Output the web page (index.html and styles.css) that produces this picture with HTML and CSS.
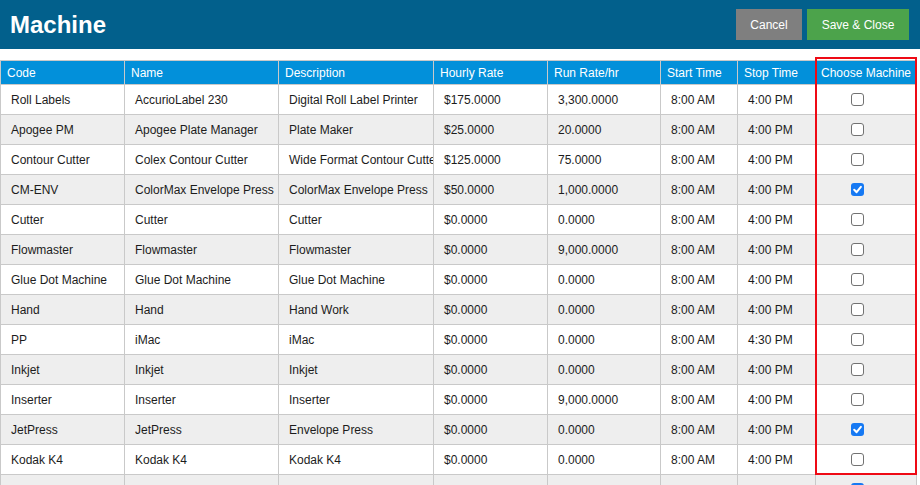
FILE: index.html
```html
<!DOCTYPE html>
<html>
<head>
<meta charset="utf-8">
<link rel="stylesheet" href="styles.css">
</head>
<body>
<div class="page">
  <header class="topbar">
    <h1 class="title">Machine</h1>
    <div class="actions">
      <button class="btn btn-cancel">Cancel</button>
      <button class="btn btn-save">Save &amp; Close</button>
    </div>
  </header>
  <div class="grid-wrap">
    <table class="grid">
      <colgroup>
        <col class="c-code"><col class="c-name"><col class="c-desc"><col class="c-rate"><col class="c-run"><col class="c-start"><col class="c-stop"><col class="c-choose">
      </colgroup>
      <thead>
        <tr><th>Code</th><th>Name</th><th>Description</th><th>Hourly Rate</th><th>Run Rate/hr</th><th>Start Time</th><th>Stop Time</th><th class="center">Choose Machine</th></tr>
      </thead>
      <tbody>
        <tr><td>Roll Labels</td><td>AccurioLabel 230</td><td>Digital Roll Label Printer</td><td>$175.0000</td><td>3,300.0000</td><td>8:00 AM</td><td>4:00 PM</td><td class="choose"><span class="cb"></span></td></tr>
        <tr><td>Apogee PM</td><td>Apogee Plate Manager</td><td>Plate Maker</td><td>$25.0000</td><td>20.0000</td><td>8:00 AM</td><td>4:00 PM</td><td class="choose"><span class="cb"></span></td></tr>
        <tr><td>Contour Cutter</td><td>Colex Contour Cutter</td><td>Wide Format Contour Cutter</td><td>$125.0000</td><td>75.0000</td><td>8:00 AM</td><td>4:00 PM</td><td class="choose"><span class="cb"></span></td></tr>
        <tr><td>CM-ENV</td><td>ColorMax Envelope Press</td><td>ColorMax Envelope Press</td><td>$50.0000</td><td>1,000.0000</td><td>8:00 AM</td><td>4:00 PM</td><td class="choose"><span class="cb checked"><svg viewBox="0 0 13 13" width="13" height="13"><path d="M3.2 6.8 L5.6 9.2 L9.9 3.8" fill="none" stroke="#fff" stroke-width="2" stroke-linecap="round" stroke-linejoin="round"/></svg></span></td></tr>
        <tr><td>Cutter</td><td>Cutter</td><td>Cutter</td><td>$0.0000</td><td>0.0000</td><td>8:00 AM</td><td>4:00 PM</td><td class="choose"><span class="cb"></span></td></tr>
        <tr><td>Flowmaster</td><td>Flowmaster</td><td>Flowmaster</td><td>$0.0000</td><td>9,000.0000</td><td>8:00 AM</td><td>4:00 PM</td><td class="choose"><span class="cb"></span></td></tr>
        <tr><td>Glue Dot Machine</td><td>Glue Dot Machine</td><td>Glue Dot Machine</td><td>$0.0000</td><td>0.0000</td><td>8:00 AM</td><td>4:00 PM</td><td class="choose"><span class="cb"></span></td></tr>
        <tr><td>Hand</td><td>Hand</td><td>Hand Work</td><td>$0.0000</td><td>0.0000</td><td>8:00 AM</td><td>4:00 PM</td><td class="choose"><span class="cb"></span></td></tr>
        <tr><td>PP</td><td>iMac</td><td>iMac</td><td>$0.0000</td><td>0.0000</td><td>8:00 AM</td><td>4:30 PM</td><td class="choose"><span class="cb"></span></td></tr>
        <tr><td>Inkjet</td><td>Inkjet</td><td>Inkjet</td><td>$0.0000</td><td>0.0000</td><td>8:00 AM</td><td>4:00 PM</td><td class="choose"><span class="cb"></span></td></tr>
        <tr><td>Inserter</td><td>Inserter</td><td>Inserter</td><td>$0.0000</td><td>9,000.0000</td><td>8:00 AM</td><td>4:00 PM</td><td class="choose"><span class="cb"></span></td></tr>
        <tr><td>JetPress</td><td>JetPress</td><td>Envelope Press</td><td>$0.0000</td><td>0.0000</td><td>8:00 AM</td><td>4:00 PM</td><td class="choose"><span class="cb checked"><svg viewBox="0 0 13 13" width="13" height="13"><path d="M3.2 6.8 L5.6 9.2 L9.9 3.8" fill="none" stroke="#fff" stroke-width="2" stroke-linecap="round" stroke-linejoin="round"/></svg></span></td></tr>
        <tr><td>Kodak K4</td><td>Kodak K4</td><td>Kodak K4</td><td>$0.0000</td><td>0.0000</td><td>8:00 AM</td><td>4:00 PM</td><td class="choose"><span class="cb"></span></td></tr>
        <tr><td>Mailing</td><td>Mailing</td><td>Mailing</td><td>$0.0000</td><td>0.0000</td><td>8:00 AM</td><td>4:00 PM</td><td class="choose"><span class="cb checked"><svg viewBox="0 0 13 13" width="13" height="13"><path d="M3.2 6.8 L5.6 9.2 L9.9 3.8" fill="none" stroke="#fff" stroke-width="2" stroke-linecap="round" stroke-linejoin="round"/></svg></span></td></tr>
      </tbody>
    </table>
    <div class="highlight"></div>
  </div>
</div>
</body>
</html>
```

FILE: styles.css
```css
html, body {
  margin: 0;
  padding: 0;
  background: #ffffff;
  overflow: hidden;
}
body {
  font-family: "Liberation Sans", Arial, Helvetica, sans-serif;
  color: #1c1c1c;
  width: 920px;
  height: 485px;
}
.page {
  width: 920px;
}
.topbar {
  height: 49px;
  background: #02608c;
  display: flex;
  align-items: center;
  justify-content: space-between;
  padding: 0 11px 0 10px;
  box-sizing: border-box;
}
.title {
  margin: 0;
  color: #ffffff;
  font-size: 24px;
  font-weight: bold;
  line-height: 1;
  padding-bottom: 0;
}
.actions {
  display: flex;
  gap: 5px;
  padding-bottom: 0;
}
.btn {
  font-family: "Liberation Sans", Arial, Helvetica, sans-serif;
  font-size: 12px;
  color: #ffffff;
  border: none;
  height: 31px;
  padding: 0;
  margin: 0;
  border-radius: 0;
}
.btn-cancel {
  background: #7f7f7f;
  width: 66px;
}
.btn-save {
  background: #4ca34b;
  width: 102px;
}
.grid-wrap {
  position: relative;
  margin-top: 11px;
}
.grid {
  border-collapse: collapse;
  table-layout: fixed;
  width: 917px;
  font-size: 12px;
}
.c-code { width: 124px; }
.c-name { width: 154px; }
.c-desc { width: 155px; }
.c-rate { width: 114px; }
.c-run { width: 113px; }
.c-start { width: 77px; }
.c-stop { width: 78px; }
.c-choose { width: 101px; }
.grid th, .grid td {
  border: 1px solid #c9c9c9;
  white-space: nowrap;
  overflow: hidden;
  text-overflow: clip;
  text-align: left;
}
.grid th {
  background: #0290da;
  color: #ffffff;
  font-weight: normal;
  height: 23px;
  padding: 0 6px;
  line-height: 14px;
}
.grid td {
  height: 30px;
  padding: 0 10px;
  line-height: 14px;
  box-sizing: border-box;
}
.grid tbody tr:nth-child(even) td {
  background: #eeeeee;
}
.grid th.center {
  text-align: center;
  padding: 0 2px;
}
.grid td.choose {
  padding: 0 0 0 35px;
}
.cb {
  display: inline-block;
  width: 13px;
  height: 13px;
  box-sizing: border-box;
  border: 1px solid #727272;
  border-radius: 3px;
  background: #ffffff;
  vertical-align: middle;
  position: relative;
  top: -1px;
}
.cb.checked {
  border: none;
  background: #1679f3;
}
.cb svg {
  display: block;
}
.highlight {
  position: absolute;
  left: 815px;
  top: -3px;
  width: 102px;
  height: 418px;
  border: 2px solid #ee0a15;
  box-sizing: border-box;
  pointer-events: none;
}
```
